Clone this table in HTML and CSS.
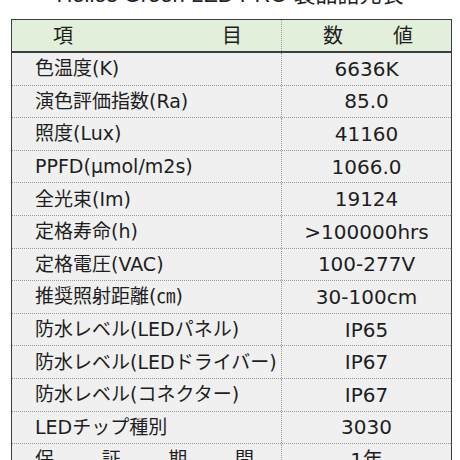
FILE: index.html
```html
<!DOCTYPE html>
<html lang="ja">
<head>
<meta charset="utf-8">
<link rel="stylesheet" href="styles.css">
</head>
<body>
<div class="title">Helios Green LED PRO 製品諸元表</div>
<div class="sheet">
  <div class="row head">
    <div class="cell key spread"><span>項</span><span>目</span></div>
    <div class="cell val spread val-spread"><span>数</span><span>値</span></div>
  </div>
  <div class="row"><div class="cell key">色温度(K)</div><div class="cell val">6636K</div></div>
  <div class="row"><div class="cell key">演色評価指数(Ra)</div><div class="cell val">85.0</div></div>
  <div class="row"><div class="cell key">照度(Lux)</div><div class="cell val">41160</div></div>
  <div class="row"><div class="cell key">PPFD(μmol/m2s)</div><div class="cell val">1066.0</div></div>
  <div class="row"><div class="cell key">全光束(Im)</div><div class="cell val">19124</div></div>
  <div class="row"><div class="cell key">定格寿命(h)</div><div class="cell val">&gt;100000hrs</div></div>
  <div class="row"><div class="cell key">定格電圧(VAC)</div><div class="cell val">100-277V</div></div>
  <div class="row"><div class="cell key">推奨照射距離(㎝)</div><div class="cell val">30-100cm</div></div>
  <div class="row"><div class="cell key">防水レベル(LEDパネル)</div><div class="cell val">IP65</div></div>
  <div class="row"><div class="cell key">防水レベル(LEDドライバー)</div><div class="cell val">IP67</div></div>
  <div class="row"><div class="cell key">防水レベル(コネクター)</div><div class="cell val">IP67</div></div>
  <div class="row"><div class="cell key">LEDチップ種別</div><div class="cell val">3030</div></div>
  <div class="row"><div class="cell key spread warranty"><span>保</span><span>証</span><span>期</span><span>間</span></div><div class="cell val">1年</div></div>
</div>
</body>
</html>
```
FILE: styles.css
```css
html, body {
  margin: 0;
  padding: 0;
  background: #ffffff;
}
body {
  font-family: "DejaVu Sans", "Noto Sans CJK JP", sans-serif;
  color: #1e1e1e;
  overflow: hidden;
}
.title {
  height: 22px;
  margin-top: -16px;
  margin-bottom: 13px;
  text-align: center;
  font-family: "Liberation Sans", "Noto Sans CJK JP", sans-serif;
  font-size: 22px;
  line-height: 22px;
  color: #222;
  white-space: nowrap;
}
.sheet {
  margin-left: 11px;
  width: 441px;
  box-sizing: border-box;
  border: 1.5px solid #3c3c3c;
  background: #f0f0f0;
}
.row {
  display: grid;
  grid-template-columns: 270px 1fr;
  height: 32.6px;
  box-sizing: border-box;
  border-bottom: 1px dotted #9a9a9a;
}
.row.head {
  height: 33px;
  background: #e2efda;
  border-bottom: 2px solid #3c3c3c;
}
.cell {
  display: flex;
  align-items: center;
  font-size: 19px;
  line-height: 1;
  white-space: nowrap;
  box-sizing: border-box;
}
.key {
  padding-left: 23px;
  border-right: 1px dotted #9a9a9a;
}
.val {
  justify-content: center;
  font-size: 20px;
}
.spread {
  justify-content: space-between;
}
.head .cell {
  font-size: 20px;
}
.head .key {
  padding-left: 41px;
  padding-right: 39px;
}
.head .val {
  padding-left: 41px;
  padding-right: 38px;
}
.warranty {
  padding-right: 27px;
}
```
